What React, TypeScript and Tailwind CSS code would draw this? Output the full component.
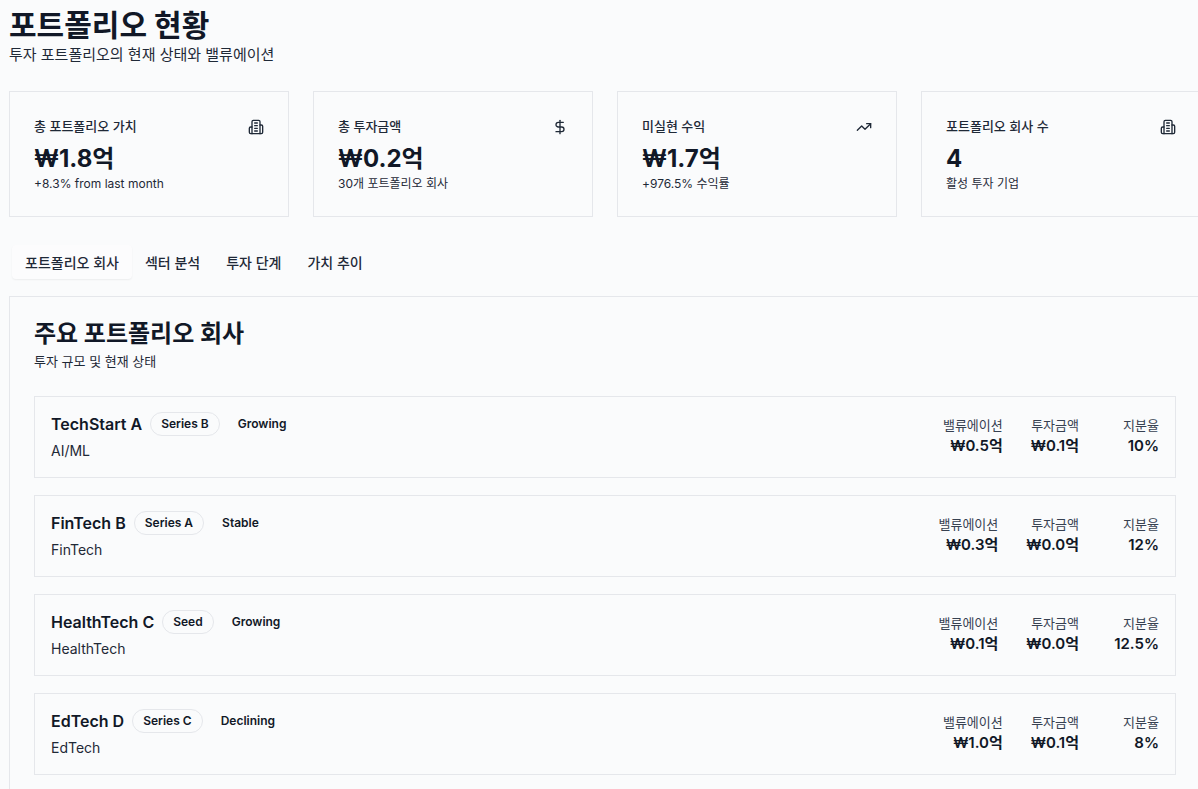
import React from "react";

const F = { fontFamily: "Inter, 'Noto Sans CJK KR', sans-serif" };

const Building = () => (
  <svg width="16" height="16" viewBox="0 0 24 24" fill="none" stroke="currentColor" strokeWidth="2" strokeLinecap="round" strokeLinejoin="round">
    <path d="M6 22V4a2 2 0 0 1 2-2h8a2 2 0 0 1 2 2v18Z" />
    <path d="M6 12H4a2 2 0 0 0-2 2v6a2 2 0 0 0 2 2h2" />
    <path d="M18 9h2a2 2 0 0 1 2 2v9a2 2 0 0 1-2 2h-2" />
    <path d="M10 6h4M10 10h4M10 14h4M10 18h4" />
  </svg>
);
const Dollar = () => (
  <svg width="16" height="16" viewBox="0 0 24 24" fill="none" stroke="currentColor" strokeWidth="2" strokeLinecap="round" strokeLinejoin="round">
    <line x1="12" x2="12" y1="2" y2="22" />
    <path d="M17 5H9.5a3.5 3.5 0 0 0 0 7h5a3.5 3.5 0 0 1 0 7H6" />
  </svg>
);
const Trend = () => (
  <svg width="16" height="16" viewBox="0 0 24 24" fill="none" stroke="currentColor" strokeWidth="2" strokeLinecap="round" strokeLinejoin="round">
    <polyline points="22 7 13.5 15.5 8.5 10.5 2 17" />
    <polyline points="16 7 22 7 22 13" />
  </svg>
);

const stats = [
  { t: "총 포트폴리오 가치", v: "₩1.8억", s: "+8.3% from last month", i: <Building /> },
  { t: "총 투자금액", v: "₩0.2억", s: "30개 포트폴리오 회사", i: <Dollar /> },
  { t: "미실현 수익", v: "₩1.7억", s: "+976.5% 수익률", i: <Trend /> },
  { t: "포트폴리오 회사 수", v: "4", s: "활성 투자 기업", i: <Building /> },
];

const rows = [
  { n: "TechStart A", st: "Series B", g: "Growing", sec: "AI/ML", val: "₩0.5억", inv: "₩0.1억", p: "10%" },
  { n: "FinTech B", st: "Series A", g: "Stable", sec: "FinTech", val: "₩0.3억", inv: "₩0.0억", p: "12%" },
  { n: "HealthTech C", st: "Seed", g: "Growing", sec: "HealthTech", val: "₩0.1억", inv: "₩0.0억", p: "12.5%" },
  { n: "EdTech D", st: "Series C", g: "Declining", sec: "EdTech", val: "₩1.0억", inv: "₩0.1억", p: "8%" },
];

export default function App() {
  return (
    <div style={F} className="bg-[#fafbfc] text-[#111827] w-[1198px] h-[789px] overflow-hidden">
      <div className="w-[1192px] ml-[9px] pt-[5px]">
        <h1 className="text-[30px] font-bold leading-[40px]">포트폴리오 현황</h1>
        <p className="text-[15px] text-[#1f2937] leading-[22px] mt-[-1px]">투자 포트폴리오의 현재 상태와 밸류에이션</p>
        <div className="grid grid-cols-4 gap-6 mt-[25px]">
          {stats.map((s) => (
            <div key={s.t} className="border border-[#e5e7eb] h-[126px] px-6 pt-[25px]">
              <div className="flex justify-between items-center text-[13px] font-medium text-[#1f2937]">
                <span>{s.t}</span>
                {s.i}
              </div>
              <div className="text-[24px] font-bold leading-[32px] mt-[6px]">{s.v}</div>
              <div className="text-[12px] text-[#1f2937]">{s.s}</div>
            </div>
          ))}
        </div>
        <div className="flex items-center mt-[27px] h-[36px] text-[14px] font-medium text-[#1f2937]">
          <div className="px-[13px] h-[34px] flex items-center bg-[#fcfcfd] shadow-[0_1px_2px_rgba(0,0,0,0.06)] rounded-sm ml-[3px]">포트폴리오 회사</div>
          <div className="px-[13px]">섹터 분석</div>
          <div className="px-[13px]">투자 단계</div>
          <div className="px-[13px]">가치 추이</div>
        </div>
        <div className="border border-[#e5e7eb] mt-[16px] px-6 pt-[21px] pb-6">
          <h2 className="text-[24px] font-bold leading-[32px]">주요 포트폴리오 회사</h2>
          <p className="text-[13px] text-[#1f2937] mt-[2px]">투자 규모 및 현재 상태</p>
          <div className="flex flex-col gap-[17px] mt-[24px]">
            {rows.map((r) => (
              <div key={r.n} className="border border-[#e5e7eb] h-[82px] px-4 flex items-center justify-between">
                <div>
                  <div className="flex items-center gap-2">
                    <span className="text-[16px] font-semibold">{r.n}</span>
                    <span className="border border-[#e5e7eb] rounded-full px-[10px] py-[2px] text-[12px] font-semibold">{r.st}</span>
                    <span className="px-[10px] text-[12px] font-semibold">{r.g}</span>
                  </div>
                  <div className="text-[14px] text-[#1f2937] mt-[4px]">{r.sec}</div>
                </div>
                <div className="flex gap-[28px] text-right">
                  <div><div className="text-[13px] text-[#374151]">밸류에이션</div><div className="text-[15px] font-semibold">{r.val}</div></div>
                  <div><div className="text-[13px] text-[#374151]">투자금액</div><div className="text-[15px] font-semibold">{r.inv}</div></div>
                  <div className="w-[52px]"><div className="text-[13px] text-[#374151]">지분율</div><div className="text-[15px] font-semibold">{r.p}</div></div>
                </div>
              </div>
            ))}
          </div>
        </div>
      </div>
    </div>
  );
}
